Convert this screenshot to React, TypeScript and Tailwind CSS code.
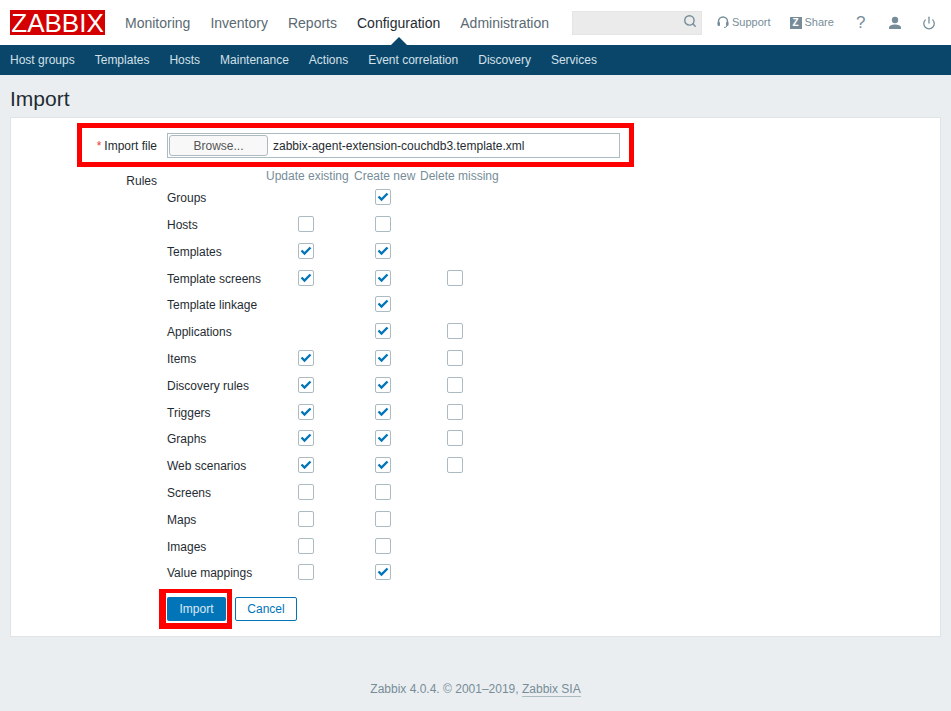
import { Search, Power } from "lucide-react";

const font = "font-['Liberation_Sans',Arial,sans-serif]";

const mainNav = ["Monitoring", "Inventory", "Reports", "Configuration", "Administration"];
const subNav = ["Host groups", "Templates", "Hosts", "Maintenance", "Actions", "Event correlation", "Discovery", "Services"];

// null = no checkbox in that column
const rules: { name: string; update: boolean | null; create: boolean | null; del: boolean | null }[] = [
  { name: "Groups", update: null, create: true, del: null },
  { name: "Hosts", update: false, create: false, del: null },
  { name: "Templates", update: true, create: true, del: null },
  { name: "Template screens", update: true, create: true, del: false },
  { name: "Template linkage", update: null, create: true, del: null },
  { name: "Applications", update: null, create: true, del: false },
  { name: "Items", update: true, create: true, del: false },
  { name: "Discovery rules", update: true, create: true, del: false },
  { name: "Triggers", update: true, create: true, del: false },
  { name: "Graphs", update: true, create: true, del: false },
  { name: "Web scenarios", update: true, create: true, del: false },
  { name: "Screens", update: false, create: false, del: null },
  { name: "Maps", update: false, create: false, del: null },
  { name: "Images", update: false, create: false, del: null },
  { name: "Value mappings", update: false, create: true, del: null },
];

const Check = ({ on }: { on: boolean | null }) => {
  if (on === null) return null;
  return (
    <div className="w-4 h-4 rounded-[2px] border border-[#acbbc2] bg-white flex items-center justify-center">
      {on && (
        <svg width="12" height="10" viewBox="0 0 12 10" fill="none">
          <path d="M1.5 4.5 L4.5 7.5 L10.5 1.5" stroke="#0275b8" strokeWidth="2.4" />
        </svg>
      )}
    </div>
  );
};

const App = () => {
  return (
    <div className={`${font} relative w-[951px] h-[711px] overflow-hidden bg-[#ebeef0] text-[12px] text-[#1f2c33]`}>
      <header className="relative h-[45px] bg-white flex items-center">
        <div className="ml-[10px] w-[95px] h-[25px] bg-[#d40000] flex items-center justify-center text-white text-[26px] leading-none">
          ZABBIX
        </div>
        <nav className="ml-[10px] flex pt-[2px]">
          {mainNav.map((n) => (
            <span key={n} className={`px-[10px] text-[14px] ${n === "Configuration" ? "text-[#1f2c33]" : "text-[#5a6a72]"}`}>
              {n}
            </span>
          ))}
        </nav>
        <div className="ml-[13px] w-[130px] h-[24px] bg-[#ebebeb] border border-[#e5e5e5] flex items-center justify-end pr-[4px] pb-[3px]">
          <Search size={14} strokeWidth={2.4} className="text-[#768d99]" />
        </div>
        <div className="ml-[15px] flex items-center text-[11px] text-[#768d99]">
          <svg width="12" height="13" viewBox="0 0 12 13" fill="none" className="mr-[3px]">
            <path d="M1.5 8 V5.5 A4.5 4.5 0 0 1 10.5 5.5 V8" stroke="#768d99" strokeWidth="1.5" />
            <rect x="0.5" y="6" width="2.5" height="4" rx="1" fill="#768d99" />
            <rect x="9" y="6" width="2.5" height="4" rx="1" fill="#768d99" />
            <path d="M10 10 Q9 11.5 7 11.5" stroke="#768d99" strokeWidth="1" />
          </svg>
          Support
        </div>
        <div className="ml-[19px] flex items-center text-[11px] text-[#768d99]">
          <span className="w-3 h-3 mr-[3px] bg-[#768d99] text-white text-[10px] font-bold leading-3 text-center">Z</span>
          Share
        </div>
        <span className="ml-[22px] w-[8px] text-center text-[17px] text-[#768d99]">?</span>
        <svg width="14" height="14" viewBox="0 0 14 14" className="ml-[24px]" fill="#768d99">
          <circle cx="7" cy="4" r="3.2" />
          <path d="M1 13 V11.5 C1 9.5 4 8.5 7 8.5 C10 8.5 13 9.5 13 11.5 V13 Z" />
        </svg>
        <Power size={14} strokeWidth={2.2} className="ml-[20px] text-[#768d99]" />
        <div className="absolute left-[391px] top-[37px] w-0 h-0 border-x-[8px] border-x-transparent border-b-[8px] border-b-[#0a466a]" />
      </header>

      <nav className="h-[30px] bg-[#0a466a] flex items-center pl-[10px] gap-[20px] text-[#d3e0e8]">
        {subNav.map((n) => (
          <span key={n}>{n}</span>
        ))}
      </nav>

      <h1 className="ml-[10px] mt-[11px] h-[31px] text-[21px] leading-[26px] text-[#1f2c33]">Import</h1>

      <main className="relative mx-[10px] w-[931px] h-[520px] bg-white border border-[#dfe4e7]">
        <div className="flex items-center mt-[15px] h-[25px]">
          <div className="w-[146px] text-right">
            <span className="text-[#e33734] mr-[3px]">*</span>Import file
          </div>
          <div className="ml-[10px] w-[453px] h-[25px] border border-[#acbbc2] flex items-center pl-[1px]">
            <div className="w-[99px] h-[21px] rounded-[3px] border border-[#acbbc2] bg-[#f8f8f8] flex items-center justify-center text-[#555]">
              Browse...
            </div>
            <span className="ml-[5px]">zabbix-agent-extension-couchdb3.template.xml</span>
          </div>
        </div>

        <div className="flex mt-[11px]">
          <div className="w-[146px] text-right pt-[5px] leading-[14px]">Rules</div>
          <div className="ml-[10px]">
            <div className="grid grid-cols-[99px_88px_66px_79px] h-[14.8px] text-[#768d99] leading-[15px]">
              <span />
              <span>Update existing</span>
              <span>Create new</span>
              <span>Delete missing</span>
            </div>
            {rules.map((r) => (
              <div key={r.name} className="grid grid-cols-[99px_88px_66px_79px] h-[26.8px] items-center">
                <span className="pt-[2px]">{r.name}</span>
                <div className="pl-[32px]"><Check on={r.update} /></div>
                <div className="pl-[21px]"><Check on={r.create} /></div>
                <div className="pl-[27px]"><Check on={r.del} /></div>
              </div>
            ))}
          </div>
        </div>

        <div className="flex ml-[156px] mt-[11px] gap-[9px]">
          <div className="w-[59px] h-[24px] rounded-[2px] bg-[#0275b8] text-white/85 flex items-center justify-center">Import</div>
          <div className="w-[62px] h-[24px] rounded-[2px] border border-[#0275b8] text-[#0275b8] bg-white flex items-center justify-center">Cancel</div>
        </div>

        {/* red annotation boxes lying over the form */}
        <div className="absolute left-[66px] top-[5px] w-[557px] h-[44px] border-[5px] border-[#ff0000]" />
        <div className="absolute left-[148px] top-[471px] w-[73px] h-[40px] border-solid border-[#ff0000] border-t-[4px] border-b-[6px] border-l-[7px] border-r-[5px]" />
      </main>

      <footer className="mt-[45px] text-center text-[#768d99] leading-[14px]">
        Zabbix 4.0.4. © 2001–2019, <span className="border-b border-[#acbbc2]">Zabbix SIA</span>
      </footer>
    </div>
  );
};

export default App;
